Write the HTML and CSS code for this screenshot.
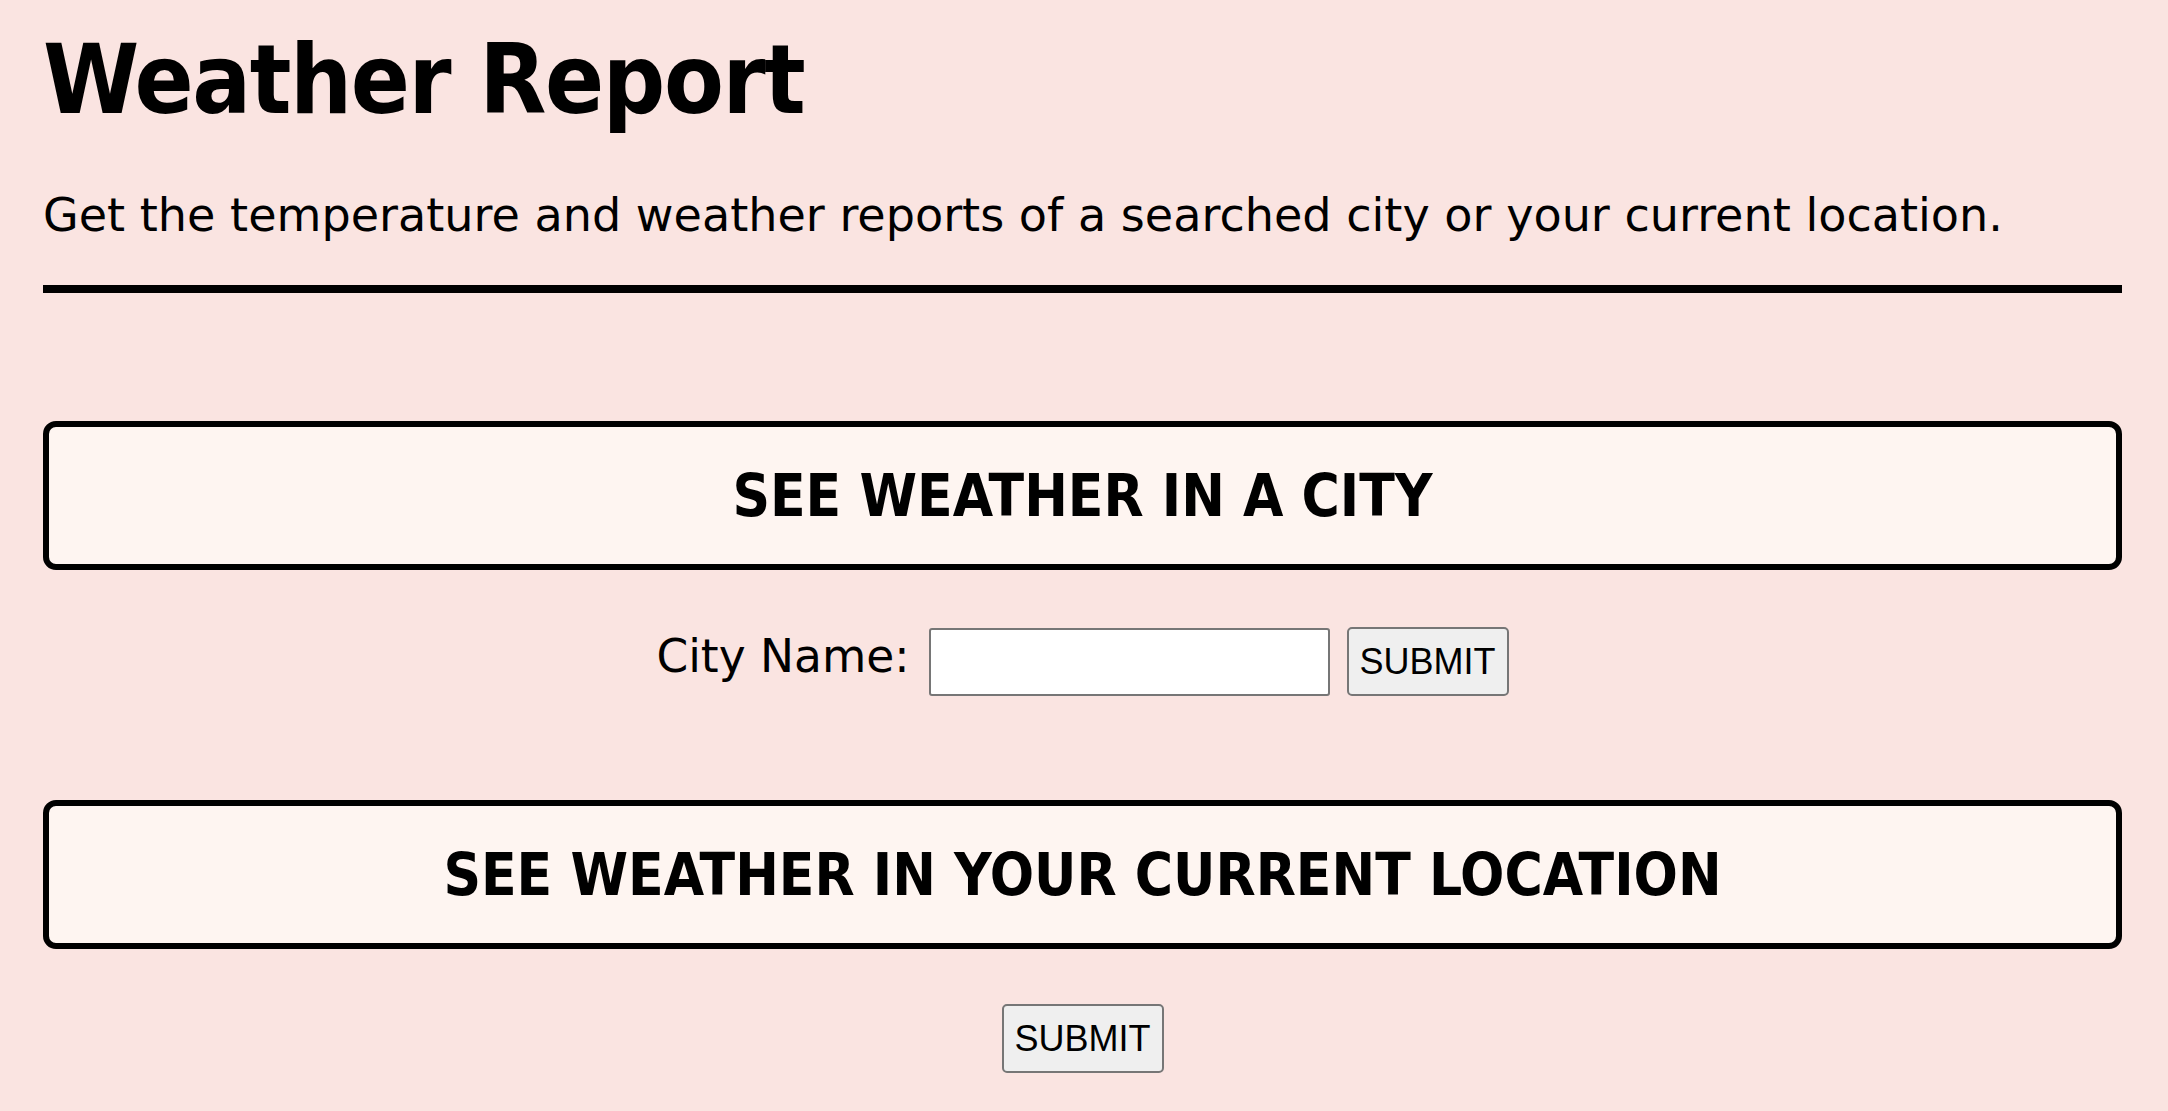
FILE: index.html
```html
<!DOCTYPE html>
<html lang="en">
<head>
<meta charset="utf-8">
<title>Weather Report</title>
<link rel="stylesheet" href="styles.css">
</head>
<body>
<main class="page">
  <h1 class="title">Weather Report</h1>
  <p class="subtitle">Get the temperature and weather reports of a searched city or your current location.</p>
  <hr class="rule">
  <section class="section">
    <div class="banner">SEE WEATHER IN A CITY</div>
    <form class="city-form">
      <label class="city-label" for="city">City Name:</label>
      <input class="city-input" id="city" type="text">
      <button class="submit" type="button">SUBMIT</button>
    </form>
  </section>
  <section class="section section-second">
    <div class="banner">SEE WEATHER IN YOUR CURRENT LOCATION</div>
    <button class="submit submit-center" type="button">SUBMIT</button>
  </section>
</main>
</body>
</html>
```
FILE: styles.css
```css
html, body {
  margin: 0;
  padding: 0;
  background: #fae4e1;
}

body {
  font-family: "DejaVu Sans", "Liberation Sans", sans-serif;
  color: #000;
}

.page {
  padding: 23px 46px 0 43px;
}

.title {
  margin: 0;
  font-family: "DejaVu Sans Condensed", "DejaVu Sans", sans-serif;
  font-stretch: condensed;
  font-weight: bold;
  font-size: 97px;
  line-height: 113px;
  letter-spacing: -1.4px;
}

.subtitle {
  margin: 52px 0 0 0;
  font-size: 46.1px;
  line-height: 54px;
}

.rule {
  margin: 43px 0 0 0;
  height: 8px;
  border: none;
  background: #000;
}

.section {
  margin-top: 128px;
}

.section-second {
  margin-top: 104px;
}

.banner {
  box-sizing: border-box;
  height: 149px;
  border: 6px solid #000;
  border-radius: 13px;
  background: #fef5f1;
  display: flex;
  align-items: center;
  justify-content: center;
  font-family: "DejaVu Sans Condensed", "DejaVu Sans", sans-serif;
  font-stretch: condensed;
  font-weight: bold;
  font-size: 58px;
}

.city-form {
  margin: 57px 0 0 0;
  display: flex;
  align-items: center;
  justify-content: center;
  height: 69px;
}

.city-label {
  font-size: 45.5px;
  line-height: 54px;
  padding-bottom: 9px;
  margin-right: 19px;
}

.city-input {
  box-sizing: border-box;
  width: 401px;
  height: 68px;
  margin: 0 17px 0 0;
  border: 2px solid #767676;
  border-radius: 3px;
  background: #fff;
  padding: 0 6px;
  font-size: 36px;
}

.submit {
  box-sizing: border-box;
  width: 162px;
  height: 69px;
  margin: 0;
  padding: 0;
  border: 2px solid #767676;
  border-radius: 5px;
  background: #efefef;
  color: #000;
  font-family: "Liberation Sans", Arial, sans-serif;
  font-size: 36px;
}

.submit-center {
  display: block;
  margin: 55px auto 0 auto;
}
```
